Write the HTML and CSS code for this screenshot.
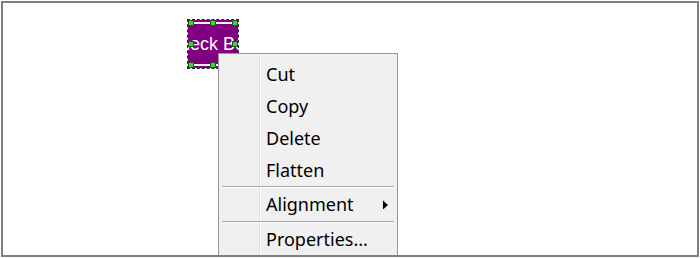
FILE: index.html
```html
<!DOCTYPE html>
<html>
<head>
<meta charset="utf-8">
<link rel="stylesheet" href="styles.css">
</head>
<body>
<div class="canvas">
  <div class="widget">
    <span class="widget-label">Check Box</span>
    <span class="strip strip-top"></span>
    <span class="strip strip-bottom"></span>
    <span class="h h-tl"></span><span class="h h-tm"></span><span class="h h-tr"></span>
    <span class="h h-ml"></span><span class="h h-mr"></span>
    <span class="h h-bl"></span><span class="h h-bm"></span><span class="h h-br"></span>
  </div>
  <div class="menu">
    <div class="item tall"><span class="label">Cut</span></div>
    <div class="item tall"><span class="label">Copy</span></div>
    <div class="item tall"><span class="label">Delete</span></div>
    <div class="item tall"><span class="label">Flatten</span></div>
    <div class="sep sep-a"></div>
    <div class="item"><span class="label">Alignment</span>
      <svg class="arrow" width="6" height="10" viewBox="0 0 6 10"><path d="M0 0.5 L5 5 L0 9.5 Z" fill="#000"/></svg>
    </div>
    <div class="sep sep-b"></div>
    <div class="item"><span class="label">Properties...</span></div>
  </div>
</div>
</body>
</html>
```
FILE: styles.css
```css
html, body {
  margin: 0;
  padding: 0;
  background: #fff;
}
.canvas {
  margin: 1px;
  width: 698px;
  height: 256px;
  box-sizing: border-box;
  border: 2px solid #808080;
  position: relative;
  overflow: hidden;
}
.widget {
  position: absolute;
  left: 185px;
  top: 17px;
  width: 50px;
  height: 48px;
  background: #800080;
  outline: 1px dashed #222;
  overflow: hidden;
  display: flex;
  align-items: center;
}
.widget-label {
  font-family: "Liberation Sans", Arial, sans-serif;
  font-size: 18px;
  color: #fff;
  white-space: nowrap;
  margin-left: -21px;
}
.strip {
  position: absolute;
  left: 4px;
  right: 4px;
  height: 2px;
  background: #eef2fb;
}
.strip-top { top: 2px; }
.strip-bottom { bottom: 2px; }
.h {
  position: absolute;
  width: 4px;
  height: 4px;
  background: #3fd23f;
  border: 1px solid #1a5a1a;
}
.h-tl { left: 0; top: 0; }
.h-tm { left: 22px; top: 0; }
.h-tr { right: 0; top: 0; }
.h-ml { left: 0; top: 21px; }
.h-mr { right: 0; top: 21px; }
.h-bl { left: 0; bottom: 0; }
.h-bm { left: 22px; bottom: 0; }
.h-br { right: 0; bottom: 0; }

.menu {
  position: absolute;
  left: 215px;
  top: 50px;
  width: 180px;
  box-sizing: border-box;
  border: 1px solid #979797;
  padding: 4px 0 0 0;
  background:
    linear-gradient(to right, transparent 40px, #e2e3e3 40px, #e2e3e3 41px, #ffffff 41px, #ffffff 42px, transparent 42px),
    #f0f0f0;
  font-family: "Segoe UI", "Noto Sans", "Open Sans", sans-serif;
  font-size: 18px;
  color: #000;
}
.item {
  height: 31px;
  display: flex;
  align-items: center;
  position: relative;
}
.item.tall {
  height: 32px;
}
.label {
  padding-left: 47px;
  line-height: 31px;
}
.arrow {
  position: absolute;
  left: 164px;
  top: 11px;
}
.sep {
  margin: 0 3px 0 3px;
  display: flex;
  flex-direction: column;
}
.sep-a {
  height: 3px;
}
.sep-b {
  height: 4px;
  padding-top: 1px;
  box-sizing: border-box;
}
.sep::before {
  content: "";
  display: block;
  height: 1px;
  background: #a8a8a8;
}
.sep::after {
  content: "";
  display: block;
  height: 1px;
  background: #ffffff;
}
```
